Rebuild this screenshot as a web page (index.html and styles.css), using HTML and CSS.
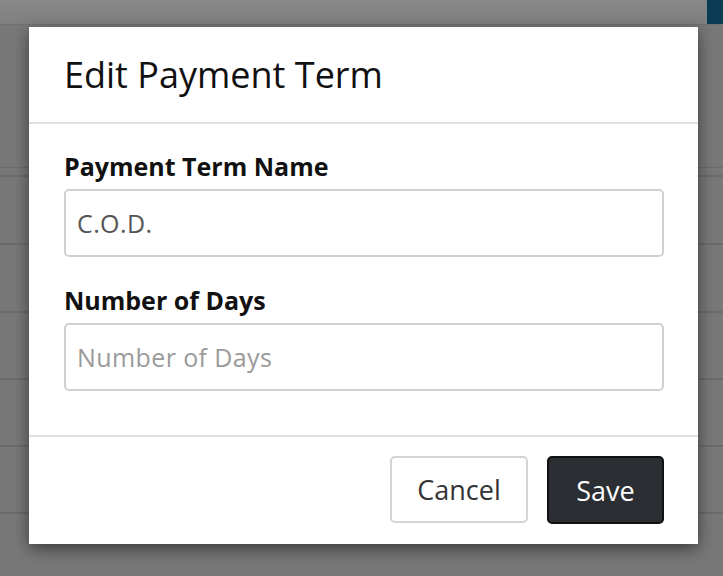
FILE: index.html
```html
<!DOCTYPE html>
<html lang="en">
<head>
<meta charset="utf-8">
<title>Edit Payment Term</title>
<link rel="stylesheet" href="styles.css">
</head>
<body>
<div class="page">
  <div class="topbar"><span class="brand-block"></span></div>
  <div class="page-head"></div>
  <div class="thead"></div>
  <div class="row row-tall"></div>
  <div class="row row-tall"></div>
  <div class="row"></div>
  <div class="row"></div>
  <div class="row"></div>
</div>

<div class="modal">
  <div class="modal-header">
    <h5 class="modal-title">Edit Payment Term</h5>
  </div>
  <div class="modal-body">
    <div class="form-group">
      <label class="form-label">Payment Term Name</label>
      <input class="form-control" type="text" value="C.O.D.">
    </div>
    <div class="form-group">
      <label class="form-label">Number of Days</label>
      <input class="form-control" type="text" placeholder="Number of Days">
    </div>
  </div>
  <div class="modal-footer">
    <button class="btn btn-light" type="button">Cancel</button>
    <button class="btn btn-dark" type="button">Save</button>
  </div>
</div>
</body>
</html>
```
FILE: styles.css
```css
* { box-sizing: border-box; }

html, body {
  margin: 0;
  padding: 0;
}

body {
  width: 723px;
  height: 576px;
  overflow: hidden;
  background: #787878;
  font-family: "Open Sans", "Noto Sans", sans-serif;
  position: relative;
}

.page {
  display: flex;
  flex-direction: column;
}

.topbar {
  height: 25px;
  background: linear-gradient(#888888, #808080);
  border-bottom: 1px solid #717171;
  display: flex;
  justify-content: flex-end;
}

.brand-block {
  width: 16px;
  height: 24px;
  background: #0a3b53;
}

.page-head {
  height: 143px;
  border-bottom: 1px solid #6b6b6b;
}

.thead {
  height: 9px;
  border-bottom: 2px solid #6b6b6b;
}

.row {
  height: 67px;
  border-bottom: 2px solid #6b6b6b;
}

.row-tall {
  height: 68px;
}

.modal {
  position: absolute;
  left: 29px;
  top: 27px;
  width: 669px;
  background: #ffffff;
  box-shadow: 0 5px 15px rgba(0, 0, 0, 0.5);
  display: flex;
  flex-direction: column;
}

.modal-header {
  padding: 26px 35px 25px;
  border-bottom: 2px solid #e0e0e0;
}

.modal-title {
  margin: 0;
  font-size: 36px;
  line-height: 44px;
  font-weight: 400;
  color: #111111;
}

.modal-body {
  padding: 27px 34px 44px 35px;
  display: flex;
  flex-direction: column;
  gap: 28px;
}

.form-group {
  display: flex;
  flex-direction: column;
  gap: 8px;
}

.form-label {
  font-size: 25px;
  line-height: 30px;
  font-weight: 700;
  color: #111111;
}

.form-control {
  height: 68px;
  width: 100%;
  padding: 0 11px;
  border: 2px solid #d0d0d0;
  border-radius: 5px;
  font-family: inherit;
  font-size: 25px;
  letter-spacing: 0.4px;
  color: #555555;
  background: #ffffff;
  outline: none;
}

.form-control::placeholder {
  color: #9a9a9a;
  opacity: 1;
}

.modal-footer {
  border-top: 2px solid #e0e0e0;
  padding: 19px 34px 20px;
  display: flex;
  justify-content: flex-end;
  gap: 19px;
}

.btn {
  height: 67px;
  border-radius: 5px;
  font-family: inherit;
  font-size: 27px;
  padding: 0;
  display: flex;
  align-items: center;
  justify-content: center;
}

.btn-light {
  width: 138px;
  background: #ffffff;
  border: 2px solid #d4d4d4;
  color: #333333;
}

.btn-dark {
  width: 117px;
  height: 68px;
  background: #2b2f33;
  border: 2px solid #111111;
  color: #ffffff;
}
```
